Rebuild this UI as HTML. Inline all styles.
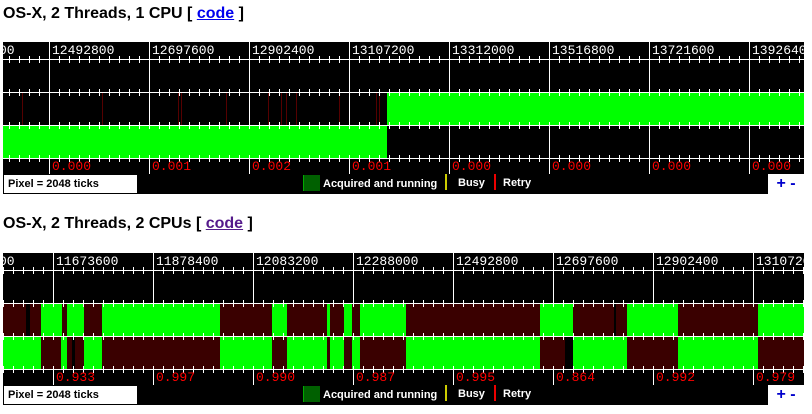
<!DOCTYPE html>
<html><head><meta charset="utf-8"><style>
body{margin:0;background:#fff;width:812px;height:414px;overflow:hidden;font-family:"Liberation Sans",sans-serif;position:relative}
h2{position:absolute;left:3px;margin:0;font-size:16px;font-weight:bold;color:#000}
h2 a{color:#00e}
h2 a.v{color:#551a8b}
.chart{position:absolute;left:3px;width:801px;height:152px;background:#000;overflow:hidden}
.chart svg{position:absolute;left:0;top:0}
.lab{position:absolute;font-family:"Liberation Mono",monospace;font-size:13px;white-space:nowrap;line-height:14px}
.w{color:#fff}.r{color:#f00}
.px{position:absolute;left:0;top:132px;background:#fff;border:1px solid #000;font-size:11px;font-weight:bold;line-height:18px;padding-left:4px;box-sizing:border-box;width:135px;height:20px}
.leg{position:absolute;top:135px;font-size:11px;font-weight:bold;color:#fff}
.pm{position:absolute;left:765px;top:132px;width:36px;height:20px;background:#fff;color:#00c;font-weight:bold;font-size:16px;line-height:19px;text-align:center}
</style></head><body>
<h2 style="top:5px">OS-X, 2 Threads, 1 CPU [ <a href="#">code</a> ]</h2>
<div class="chart" id="c1" style="top:42px">
<svg id="s1" width="801" height="152"></svg>
<div class="lab w" style="left:-4px;top:2px">00</div>
<div class="lab w" style="left:49px;top:2px">12492800</div>
<div class="lab w" style="left:149px;top:2px">12697600</div>
<div class="lab w" style="left:249px;top:2px">12902400</div>
<div class="lab w" style="left:349px;top:2px">13107200</div>
<div class="lab w" style="left:449px;top:2px">13312000</div>
<div class="lab w" style="left:549px;top:2px">13516800</div>
<div class="lab w" style="left:649px;top:2px">13721600</div>
<div class="lab w" style="left:749px;top:2px">13926400</div>
<div class="lab r" style="left:49px;top:118px">0.000</div>
<div class="lab r" style="left:149px;top:118px">0.001</div>
<div class="lab r" style="left:249px;top:118px">0.002</div>
<div class="lab r" style="left:349px;top:118px">0.001</div>
<div class="lab r" style="left:449px;top:118px">0.000</div>
<div class="lab r" style="left:549px;top:118px">0.000</div>
<div class="lab r" style="left:649px;top:118px">0.000</div>
<div class="lab r" style="left:749px;top:118px">0.000</div>
<div class="px">Pixel = 2048 ticks</div>
<div class="leg" style="left:300px;top:133px"><span style="display:inline-block;width:16px;height:16px;background:#006000;border-left:1px solid #0a0;vertical-align:-4px;margin-right:3px"></span>Acquired and running</div>
<div class="leg" style="left:442px;top:132px;width:2px;height:16px;background:#cc0"></div>
<div class="leg" style="left:455px">Busy</div>
<div class="leg" style="left:491px;top:132px;width:2px;height:16px;background:#e00"></div>
<div class="leg" style="left:500px">Retry</div>
<div class="pm">+ -</div>
</div>

<h2 style="top:215px">OS-X, 2 Threads, 2 CPUs [ <a class="v" href="#">code</a> ]</h2>
<div class="chart" id="c2" style="top:253px">
<svg id="s2" width="801" height="152"></svg>
<div class="lab w" style="left:-4px;top:2px">00</div>
<div class="lab w" style="left:53px;top:2px">11673600</div>
<div class="lab w" style="left:153px;top:2px">11878400</div>
<div class="lab w" style="left:253px;top:2px">12083200</div>
<div class="lab w" style="left:353px;top:2px">12288000</div>
<div class="lab w" style="left:453px;top:2px">12492800</div>
<div class="lab w" style="left:553px;top:2px">12697600</div>
<div class="lab w" style="left:653px;top:2px">12902400</div>
<div class="lab w" style="left:753px;top:2px">13107200</div>
<div class="lab r" style="left:53px;top:118px">0.933</div>
<div class="lab r" style="left:153px;top:118px">0.997</div>
<div class="lab r" style="left:253px;top:118px">0.990</div>
<div class="lab r" style="left:353px;top:118px">0.987</div>
<div class="lab r" style="left:453px;top:118px">0.995</div>
<div class="lab r" style="left:553px;top:118px">0.864</div>
<div class="lab r" style="left:653px;top:118px">0.992</div>
<div class="lab r" style="left:753px;top:118px">0.979</div>
<div class="px">Pixel = 2048 ticks</div>
<div class="leg" style="left:300px;top:133px"><span style="display:inline-block;width:16px;height:16px;background:#006000;border-left:1px solid #0a0;vertical-align:-4px;margin-right:3px"></span>Acquired and running</div>
<div class="leg" style="left:442px;top:132px;width:2px;height:16px;background:#cc0"></div>
<div class="leg" style="left:455px">Busy</div>
<div class="leg" style="left:491px;top:132px;width:2px;height:16px;background:#e00"></div>
<div class="leg" style="left:500px">Retry</div>
<div class="pm">+ -</div>
</div>
<script>
function R(s,x,y,w,h,c){var r=document.createElementNS("http://www.w3.org/2000/svg","rect");r.setAttribute("x",x);r.setAttribute("y",y);r.setAttribute("width",w);r.setAttribute("height",h);r.setAttribute("fill",c);s.appendChild(r);}
function segs(s,y,arr){for(var i=0;i<arr.length;i++){var a=arr[i];R(s,a[0]-3,y,a[1]-a[0],32,a[2]);}}
function vgrid(s,off){for(var x=off;x<801;x+=100)R(s,x,0,1,132,"#fff");}
function hgrid(s,off){[17,50,83,116].forEach(function(y){R(s,0,y,801,1,"#fff");for(var x=off%10;x<801;x+=10)R(s,x,y-3,1,7,"#fff");});}
var G="#0f0",D="#3a0000",K="#000";
var s1=document.getElementById("s1");
vgrid(s1,46);
segs(s1,51,[[387,804,G]]);
segs(s1,84,[[3,387,G]]);
[19,99,175,178,223,265,278,283,293,336,373,376].forEach(function(x){R(s1,x,51,1,32,"#500")});
hgrid(s1,46);
var s2=document.getElementById("s2");
vgrid(s2,50);
segs(s2,51,[[3,41,D],[26,30,K],[41,62,G],[62,67,D],[67,84,G],[84,102,D],[102,220,G],[220,272,D],[272,287,G],[287,327,D],[327,330,G],[330,344,D],[344,352,G],[352,360,D],[360,406,G],[406,540,D],[540,573,G],[573,627,D],[614,616,K],[627,678,G],[678,758,D],[758,804,G]]);
segs(s2,84,[[3,41,G],[41,61,D],[61,67,G],[67,84,D],[72,75,K],[84,102,G],[102,220,D],[220,272,G],[272,287,D],[287,327,G],[327,330,D],[330,344,G],[344,352,D],[352,360,G],[360,406,D],[406,540,G],[540,565,D],[565,573,K],[573,627,G],[627,678,D],[678,758,G],[758,804,D]]);
hgrid(s2,50);
</script>
</body></html>
